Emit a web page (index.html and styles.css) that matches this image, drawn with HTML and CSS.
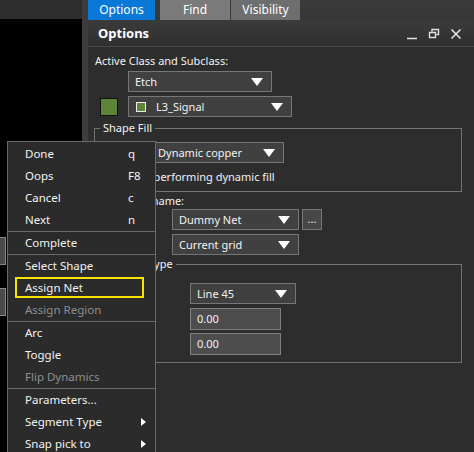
FILE: index.html
```html
<!DOCTYPE html>
<html lang="en">
<head>
    <meta charset="UTF-8">
    <title>Shape Add - Options</title>
    <link rel="stylesheet" href="styles.css">
</head>
<body>
    <div class="canvas">
        <div class="canvas-top"></div>
        <div class="canvas-view">
            <div class="stub one"></div>
            <div class="stub two"></div>
        </div>
    </div>
    <div class="splitter"></div>

    <div class="panel">
        <div class="tabs">
            <div class="tab active">Options</div>
            <div class="tab">Find</div>
            <div class="tab dim">Visibility</div>
        </div>
        <div class="header">
            <span class="title">Options</span>
            <span class="controls">
                <svg width="12" height="12" viewBox="0 0 12 12"><path d="M1 10.5h10" stroke="#e0e0e0" stroke-width="1.5"/></svg>
                <svg width="12" height="12" viewBox="0 0 12 12"><path d="M4 3.5V1.5h6.5v5h-2M1.5 4.5h6v5h-6z" fill="none" stroke="#e0e0e0" stroke-width="1.4"/></svg>
                <svg width="12" height="12" viewBox="0 0 12 12"><path d="M1.5 1.5l9 9M10.5 1.5l-9 9" stroke="#e8e8e8" stroke-width="1.5"/></svg>
            </span>
        </div>

        <div class="content">
            <div class="label">Active Class and Subclass:</div>
            <div class="row indent">
                <div class="select w144">Etch<i class="arrow"></i></div>
            </div>
            <div class="row">
                <div class="swatch"></div>
                <div class="select w164"><span class="mini"></span>L3_Signal<i class="arrow"></i></div>
            </div>

            <fieldset class="group g1">
                <legend>Shape Fill</legend>
                <div class="row">
                    <div class="select w133">Dynamic copper<i class="arrow"></i></div>
                </div>
                <div class="check-row"><span class="check"></span>Defer performing dynamic fill</div>
            </fieldset>

            <div class="label net">Assign net name:</div>
            <div class="row indent2">
                <div class="select w127">Dummy Net<i class="arrow"></i></div>
                <div class="btn">...</div>
            </div>
            <div class="row indent2">
                <div class="select w127">Current grid<i class="arrow"></i></div>
            </div>

            <fieldset class="group g2">
                <legend>Segment Type</legend>
                <div class="row indent3">
                    <div class="select w106">Line 45<i class="arrow"></i></div>
                </div>
                <div class="row indent3 tight">
                    <div class="input">0.00</div>
                </div>
                <div class="row indent3 last">
                    <div class="input">0.00</div>
                </div>
            </fieldset>
        </div>
    </div>

    <div class="menu">
        <div class="item">Done<span class="key">q</span></div>
        <div class="item">Oops<span class="key">F8</span></div>
        <div class="item">Cancel<span class="key">c</span></div>
        <div class="item">Next<span class="key">n</span></div>
        <div class="sep"></div>
        <div class="item">Complete</div>
        <div class="sep"></div>
        <div class="item">Select Shape</div>
        <div class="item marked">Assign Net</div>
        <div class="item off">Assign Region</div>
        <div class="sep"></div>
        <div class="item">Arc</div>
        <div class="item">Toggle</div>
        <div class="item off">Flip Dynamics</div>
        <div class="sep"></div>
        <div class="item">Parameters...</div>
        <div class="item sub">Segment Type</div>
        <div class="item sub">Snap pick to</div>
    </div>
</body>
</html>
```

FILE: styles.css
```css
body{
    margin: 0;
    width: 474px;
    height: 452px;
    overflow: hidden;
    display: flex;
    background-color: #000;
    font-family: "Noto Sans", "Open Sans", sans-serif;
    font-size: 11px;
    color: #f2f2f2;
    position: relative;
}
.canvas{
    width: 82px;
    display: flex;
    flex-direction: column;
}
.canvas-top{
    height: 19px;
    background-color: #2e2e2e;
}
.canvas-view{
    flex: 1;
    background-color: #000;
    position: relative;
}
.stub{
    position: absolute;
    left: -4px;
    width: 8px;
    height: 26px;
    background-color: #4a4a4a;
    border: 1px solid #8a8a8a;
}
.stub.one{ top: 218px; }
.stub.two{ top: 269px; }
.splitter{
    width: 6px;
    background-color: #3c3c3c;
}
.panel{
    flex: 1;
    background-color: #2d2d2d;
    display: flex;
    flex-direction: column;
}
.tabs{
    height: 20px;
    display: flex;
    gap: 5px;
    background: linear-gradient(#3a3a3a, #383838);
}
.tab{
    width: 70px;
    text-align: center;
    line-height: 20px;
    font-size: 12px;
    background-color: #7a7a7a;
    color: #fff;
}
.tab.active{
    width: 67px;
    background-color: #0a78d7;
}
.tab.dim{
    margin-left: -4px;
    width: 69px;
    background-color: #6e6e6e;
}
.header{
    height: 26px;
    display: flex;
    align-items: center;
    justify-content: space-between;
    padding: 0 12px 0 10px;
    background: linear-gradient(#3b3b3b, #2f2f2f);
    border-bottom: 1px solid #454545;
}
.title{
    font-weight: bold;
    font-size: 13px;
    color: #fff;
}
.controls{
    display: flex;
    gap: 10px;
    margin-top: 2px;
}
.content{
    padding: 6px 6px 0 6px;
}
.label{
    height: 16px;
    line-height: 16px;
    padding-left: 1px;
    margin-bottom: 2px;
}
.row{
    display: flex;
    align-items: center;
    gap: 3px;
    margin-bottom: 4px;
}
.indent{ padding-left: 34px; }
.indent2{ padding-left: 78px; }
.indent3{ padding-left: 95px; }
.select{
    position: relative;
    height: 19px;
    line-height: 19px;
    padding-left: 6px;
    background-color: #404040;
    border: 1px solid #777;
}
.w144{ width: 136px; }
.w164{ width: 156px; }
.w133{ width: 125px; margin-left: 56px; }
.w127{ width: 119px; }
.w106{ width: 98px; }
.arrow{
    position: absolute;
    right: 8px;
    top: 6px;
    border-left: 6px solid transparent;
    border-right: 6px solid transparent;
    border-top: 8px solid #fff;
}
.mini{
    display: inline-block;
    width: 8px;
    height: 8px;
    border: 1px solid #eee;
    background-color: #5d8437;
    vertical-align: -1px;
    margin: 0 10px 0 1px;
}
.swatch{
    width: 16px;
    height: 16px;
    margin: 0 7px 0 6px;
    background-color: #5d8437;
    border: 1px solid #111;
}
.group{
    margin: 0 6px 0 0;
    border: 1px solid #727272;
}
.group legend{
    padding: 0 3px;
    margin-left: 5px;
    line-height: 14px;
}
.g1{
    padding: 7px 0 6px 0;
}
.check-row{
    display: flex;
    align-items: center;
    padding-left: 8px;
    height: 18px;
}
.check{
    width: 11px;
    height: 11px;
    border: 1px solid #999;
    background-color: #3a3a3a;
    margin-right: 6px;
}
.label.net{
    margin-top: 1px;
    margin-bottom: 0;
}
.btn{
    width: 18px;
    height: 19px;
    line-height: 17px;
    text-align: center;
    background-color: #474747;
    border: 1px solid #777;
}
.g2{
    margin-top: -2px;
    padding: 12px 0 7px 0;
}
.g2 legend{
    margin-left: 1px;
}
.row.tight{ margin-bottom: 3px; }
.row.last{ margin-bottom: 0; }
.input{
    width: 83px;
    height: 20px;
    line-height: 20px;
    padding-left: 6px;
    background-color: #4d4d4d;
    border: 1px solid #808080;
}
.menu{
    position: absolute;
    left: 7px;
    top: 141px;
    width: 147px;
    height: 320px;
    padding-top: 1px;
    background-color: #2b2b2b;
    border: 1px solid #6a6a6a;
}
.item{
    position: relative;
    height: 22px;
    line-height: 22px;
    padding-left: 17px;
    font-size: 11.5px;
    color: #f2f2f2;
}
.key{
    position: absolute;
    left: 120px;
}
.item.off{ color: #8e8e8e; }
.item.marked::after{
    content: "";
    position: absolute;
    left: 7px;
    right: 11px;
    top: 0;
    bottom: 1px;
    border: 2px solid #f5e400;
}
.item.sub::after{
    content: "";
    position: absolute;
    left: 133px;
    top: 7px;
    border-top: 4px solid transparent;
    border-bottom: 4px solid transparent;
    border-left: 5px solid #fff;
}
.sep{
    height: 1px;
    background-color: #6a6a6a;
}
```
